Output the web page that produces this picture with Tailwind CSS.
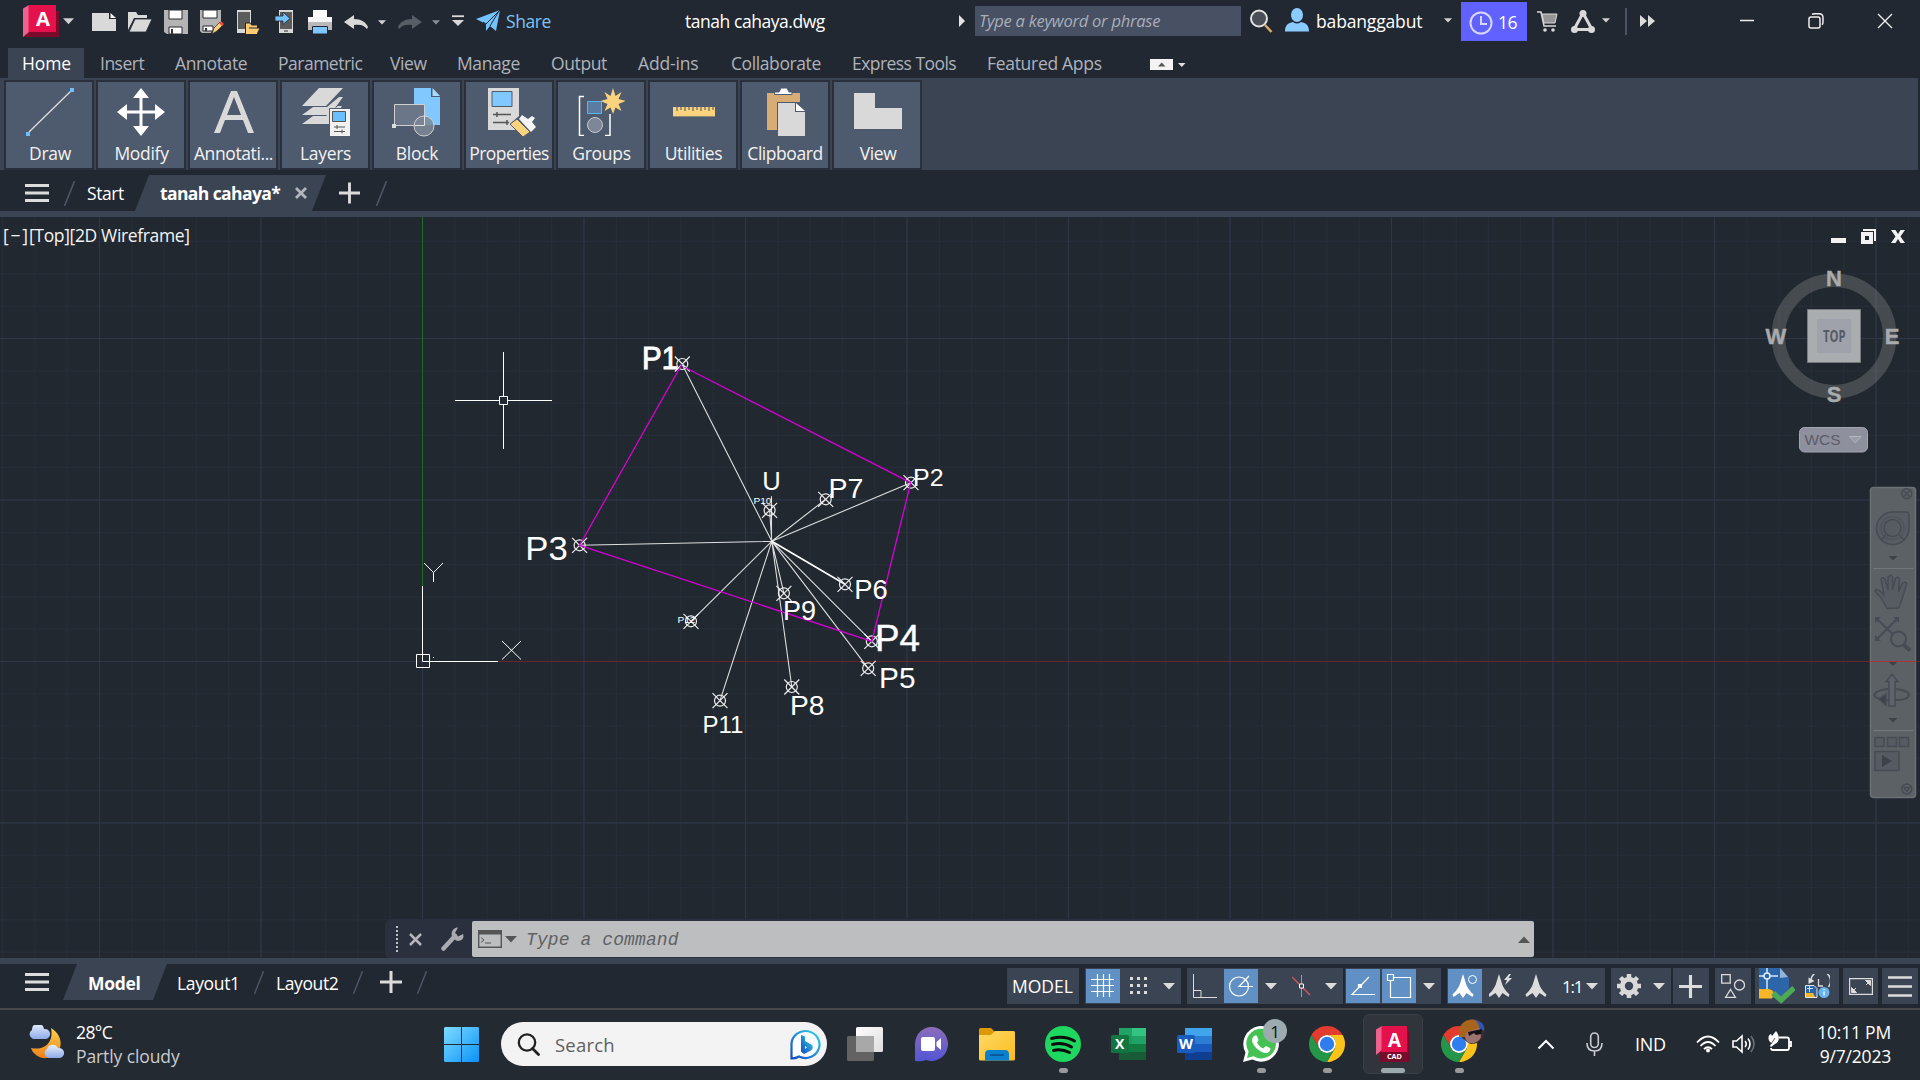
<!DOCTYPE html>
<html lang="en">
<head>
<meta charset="utf-8">
<title>tanah cahaya.dwg</title>
<script src="https://cdn.jsdelivr.net/npm/@tailwindcss/browser@4"></script>
</head>
<body class="w-[1920px] h-[1080px] overflow-hidden bg-[#222831] text-white font-['Open_Sans','Noto_Sans',sans-serif] text-[17.5px] leading-[17px] flex flex-col whitespace-nowrap">
<svg class="hidden">
  <defs>
    <symbol id="caret" viewBox="0 0 12 7"><path d="M0 0h12L6 6.5z" fill="currentColor"/></symbol>
    <symbol id="chrome" viewBox="2 2 44 44">
      <path d="M24 13H43.05A22 22 0 0 0 4.95 13L14.5 29.5A11 11 0 0 1 24 13z" fill="#e33b2e"/>
      <path d="M43.05 13A22 22 0 0 1 24 46L33.5 29.5A11 11 0 0 0 24 13z" fill="#fcc41a"/>
      <path d="M4.95 13A22 22 0 0 0 24 46L33.5 29.5A11 11 0 0 1 14.5 29.5z" fill="#23964a"/>
      <circle cx="24" cy="24" r="11" fill="#fff"/><circle cx="24" cy="24" r="8.8" fill="#2f7ef0"/>
    </symbol>
    <symbol id="burger" viewBox="0 0 24 18"><path d="M0 1.5h24M0 9h24M0 16.5h24" stroke="#dcdcdc" stroke-width="3"/></symbol>
    <symbol id="slash" viewBox="0 0 11 25"><path d="M10.5 0L.5 25" stroke="#4b5566" stroke-width="1.6"/></symbol>
    <symbol id="plus" viewBox="0 0 22 22"><path d="M11 0v22M0 11h22" stroke="#dcdcdc" stroke-width="3"/></symbol>
    <symbol id="compass" viewBox="0 0 24 24"><path d="M12 0l2.500 8c1 4 3 8 8 12.500l-1 2.500-6-4L12 24l-3.500-5-6 4-1-2.500C6.500 16 8.500 12 9.500 8z" fill="currentColor"/></symbol>
  </defs>
</svg>

<!-- title bar -->
<header class="flex h-12 shrink-0 items-start">
  <svg class="ml-[23px] mt-[5px] w-9 h-8 shrink-0" viewBox="0 0 36 32"><path d="M6 6h30v26H0l6-5z" fill="#7c0a2b"/><path d="M0 3.500L6 0v27l-6 5z" fill="#f0628d"/><path d="M5.500 0H33v27H5.500z" fill="#e5114d"/><text x="13" y="21" font-size="20" font-weight="700" fill="#fff" textLength="14" lengthAdjust="spacingAndGlyphs">A</text></svg>
  <svg class="ml-1 mt-[18px] w-[11px] h-[7px] shrink-0 text-[#d0d0d0]"><use href="#caret"/></svg>
  <div class="ml-[18px] mt-[10px] flex gap-3 shrink-0">
    <svg class="size-6" viewBox="0 0 24 24"><path d="M0 3h17v6h7v12H0z" fill="#d9d9d9"/><path d="M18.500 3v5H24z" fill="#f4f4f4"/></svg>
    <svg class="size-6" viewBox="0 0 24 24"><path d="M0 2h8l2 3h9v3H6L0 20z" fill="#d9d9d9"/><path d="M7 9h17l-6 13H1z" fill="#d9d9d9" stroke="#222831" stroke-width=".8"/></svg>
    <svg class="size-6" viewBox="0 0 24 24"><path d="M0 0h24v24H3l-3-2z" fill="#b4b4b4"/><path d="M5 0h13v9H5zM5 17h13v7H5z" fill="#fff" stroke="#222831"/><path d="M7 19h2v5H7z" fill="#333"/></svg>
    <svg class="size-6" viewBox="0 0 24 24"><path d="M0 0h21v13L12 21l-1 2H2l-2-2z" fill="#b4b4b4"/><path d="M3 0h14v8H3zM3 16h10v5H3z" fill="#fff" stroke="#222831"/><path d="M5 18h2v3H5z" fill="#333"/><path d="M12 24l2-6 6-6 3 3-6 6z" fill="#fbcf79" stroke="#222831" stroke-width=".7"/><path d="M19 13l2-2 3 3-2 2z" fill="#ee4b3c"/></svg>
    <svg class="size-6" viewBox="0 0 24 24"><path d="M1 0h14v23H1z" fill="#d9d9d9"/><path d="M2 2h12v17H2z" fill="#5c5c5c"/><path d="M9.500 13h5l1 2h6v3h2.500l-3 6.500H9.500z" fill="#fccb73" stroke="#222831"/><path d="M13 18h9" stroke="#222831"/></svg>
    <svg class="size-6" viewBox="0 0 24 24"><path d="M7 0h14v23H7z" fill="#d9d9d9"/><path d="M8 2h12v17H8z" fill="#5c5c5c"/><path d="M3 6h8V2l7 6.500-7 6V11H3z" fill="#72c3ff" stroke="#222831" stroke-width=".8"/><path d="M12 21h4" stroke="#333"/></svg>
    <svg class="size-6" viewBox="0 0 24 24"><path d="M5 0h14v7H5z" fill="#fff"/><path d="M0 7h24v13H0z" fill="#f5f5f5"/><path d="M0 12h24v8H0z" fill="#b9b9b9"/><path d="M4.500 16.500h15V24h-15z" fill="#7fc5ff" stroke="#222831"/></svg>
    <svg class="size-6" viewBox="0 0 24 24"><path d="M0 12l10-7v4c7 0 12 3 14 8l-1 2c-3-4-7-5-13-4v4z" fill="#d9d9d9"/></svg>
  </div>
  <svg class="ml-[10px] mt-5 w-2 h-[5px] shrink-0 text-[#d0d0d0]"><use href="#caret"/></svg>
  <svg class="ml-3 mt-[10px] size-6 shrink-0" viewBox="0 0 24 24"><path d="M24 12L14 5v4C7 9 2 12 0 17l1 2c3-4 7-5 13-4v4z" fill="#585e66"/></svg>
  <svg class="ml-[10px] mt-5 w-2 h-[5px] shrink-0 text-[#8a8f96]"><use href="#caret"/></svg>
  <svg class="ml-3 mt-[15px] w-3 h-3 shrink-0" viewBox="0 0 12 12"><path d="M0 1.200h12" stroke="#d9d9d9" stroke-width="1.800"/><path d="M0 5h12l-6 6z" fill="#d9d9d9"/></svg>
  <svg class="ml-3 mt-[10px] w-6 h-[21px] shrink-0" viewBox="0 0 24 21"><path d="M24 0l-4 21-6-5-4 5V14L0 9z" fill="#72c3ff"/><path d="M24 0L10 14M14 16L23 1M10 14l-3-2" stroke="#222831"/></svg>
  <span class="ml-[6px] mt-[13px] w-[45px] text-[#7cc3f5] tracking-[-0.45px]">Share</span>
  <span class="ml-[134px] mt-[13px] w-[143px] tracking-[-0.45px]">tanah cahaya.dwg</span>
  <svg class="ml-[131px] mt-[15px] w-[6px] h-3 shrink-0" viewBox="0 0 6 12"><path d="M0 0l6 6-6 6z" fill="#e5e5e5"/></svg>
  <div class="ml-[10px] mt-[6px] h-[30px] w-[266px] shrink-0 bg-[#485064] pl-1 pt-[6px] text-[16.500px] italic text-[#a9aeb8] tracking-[-0.25px]">Type a keyword or phrase</div>
  <svg class="ml-[9px] mt-[9px] w-[23px] h-6 shrink-0" viewBox="0 0 23 24"><circle cx="9" cy="9.500" r="8" fill="#4a4f57" stroke="#e2e2e2" stroke-width="2"/><path d="M15 16l6.500 7" stroke="#dba96b" stroke-width="2.500"/></svg>
  <svg class="ml-[12px] mt-2 w-6 h-6 shrink-0" viewBox="0 0 24 24"><ellipse cx="12" cy="7" rx="6" ry="7" fill="#8accff"/><path d="M0 23.500C0 17 3 15 8 14q4 3 8 0c5 1 8 3 8 9.500z" fill="#8accff"/></svg>
  <span class="ml-[7px] mt-[13px] w-[109px] shrink-0 tracking-[-0.15px]">babanggabut</span>
  <svg class="ml-[19px] mt-[18px] w-2 h-[5px] shrink-0 text-[#d0d0d0]"><use href="#caret"/></svg>
  <div class="ml-[9px] mt-[2px] flex h-[39px] w-[66px] shrink-0 items-center bg-[#6161ff] pl-2 pt-[2px]">
    <svg class="size-6" viewBox="0 0 24 24" fill="none" stroke="#d5d8ff" stroke-width="2"><circle cx="12" cy="12" r="10.500"/><path d="M12 5v8h6"/></svg><span class="ml-[5px] tracking-[-0.4px]">16</span>
  </div>
  <svg class="ml-[10px] mt-[11px] w-[21px] h-[21px] shrink-0" viewBox="0 0 21 21"><path d="M0 1h4l3 14h12" stroke="#d9d9d9" stroke-width="1.500" fill="none"/><path d="M5 3h15l-2 9H7z" fill="#969696" stroke="#d9d9d9"/><circle cx="8" cy="19" r="1.800" fill="#d9d9d9"/><circle cx="16" cy="19" r="1.800" fill="#d9d9d9"/></svg>
  <svg class="ml-[13px] mt-[10px] w-6 h-[23px] shrink-0" viewBox="0 0 24 23"><path d="M12 3L3 19.500h18z" fill="none" stroke="#d9d9d9" stroke-width="3"/><circle cx="12" cy="3.500" r="3.500" fill="#d9d9d9"/><circle cx="3.500" cy="19.500" r="3.500" fill="#d9d9d9"/><circle cx="20.500" cy="19.500" r="3.500" fill="#d9d9d9"/></svg>
  <svg class="ml-[7px] mt-[18px] w-2 h-[5px] shrink-0 text-[#d0d0d0]"><use href="#caret"/></svg>
  <div class="ml-[15px] mt-2 h-[27px] w-[2px] shrink-0 bg-[#4b5266]"></div>
  <svg class="ml-[13px] mt-[15px] w-[15px] h-3 shrink-0" viewBox="0 0 15 12"><path d="M0 0l7 6-7 6zM8 0l7 6-7 6z" fill="#dcdcdc"/></svg>
  <svg class="ml-[85px] mt-[13px] w-[14px] h-4 shrink-0" viewBox="0 0 14 16"><path d="M0 7.500h14" stroke="#eee" stroke-width="1.500"/></svg>
  <svg class="ml-[54px] mt-[13px] size-4 shrink-0" viewBox="0 0 16 16" fill="none" stroke="#eee" stroke-width="1.500"><rect x="1" y="4" width="11" height="11" rx="2"/><path d="M4 1.500q1-.8 3-.8h4q4 0 4 4v4q0 2-1 3"/></svg>
  <svg class="ml-[53px] mt-[13px] size-4 shrink-0" viewBox="0 0 16 16"><path d="M1 1l14 14M15 1L1 15" stroke="#eee" stroke-width="1.400"/></svg>
</header>

<!-- ribbon tabs -->
<nav class="flex h-[30px] shrink-0 pl-2 text-[#adb3bc] leading-[31px] tracking-[-0.4px]">
  <span class="w-[76px] bg-[#3b4453] pl-[14px] text-white tracking-[-0.1px]">Home</span>
  <span class="ml-[16px] w-[75px] tracking-[-0.5px]">Insert</span><span class="w-[103px] tracking-[-0.35px]">Annotate</span><span class="w-[112px] tracking-[-0.5px]">Parametric</span><span class="w-[67px]">View</span><span class="w-[94px]">Manage</span><span class="w-[87px]">Output</span><span class="w-[93px] tracking-[-0.15px]">Add-ins</span><span class="w-[121px]">Collaborate</span><span class="w-[135px] tracking-[-0.55px]">Express Tools</span><span class="w-[163px] tracking-[-0.3px]">Featured Apps</span>
  <svg class="mt-[11px] w-9 h-[11px]" viewBox="0 0 36 11"><path d="M0 0h23v11H0z" fill="#f3f3f3"/><path d="M8 7.500h7.500L11.700 3.500z" fill="#555"/><path d="M28 4h7.500l-3.700 4z" fill="#e0e0e0"/></svg>
</nav>

<!-- ribbon panels -->
<section class="flex h-[92px] shrink-0 gap-[6px] border-r-2 border-[#222831] bg-[#3b4453] pl-[6px] pt-1 text-[#f2f2f2] text-center tracking-[-0.3px]">
  <div class="flex h-[86px] w-[86px] flex-col items-center bg-[#4e5a6d] outline-2 outline-[#29303b]"><svg class="mt-[6px] ml-[2px] size-12" viewBox="0 0 48 48"><path d="M3 44L45 3" stroke="#dedede" stroke-width="1.300"/><path d="M0 44h4v4H0zM44 0h4v4h-4z" fill="#69bfff"/></svg><span class="ml-[2px] mt-[9px]">Draw</span></div>
  <div class="flex h-[86px] w-[86px] flex-col items-center bg-[#4e5a6d] outline-2 outline-[#29303b]"><svg class="mt-[6px] size-12" viewBox="0 0 48 48"><path d="M24 5v38M5 24h38" stroke="#fff" stroke-width="3"/><path d="M24 0l8 10H16zM24 48l8-10H16zM0 24l10-8v16zM48 24l-10-8v16z" fill="#fff"/></svg><span class="ml-px mt-[9px]">Modify</span></div>
  <div class="flex h-[86px] w-[86px] flex-col items-center bg-[#4e5a6d] outline-2 outline-[#29303b]"><svg class="ml-[2px] mt-[6px] size-12" viewBox="0 0 48 48"><path d="M4 45L21 3h6l17 42h-6l-5-13H15l-5 13zM17 27h14L24 9z" fill="#d9d9d9" fill-rule="evenodd"/></svg><span class="ml-px mt-[9px] tracking-[-0.4px]">Annotati...</span></div>
  <div class="flex h-[86px] w-[86px] flex-col items-center bg-[#4e5a6d] outline-2 outline-[#29303b]"><svg class="ml-[2px] mt-[6px] size-12" viewBox="0 0 48 48"><path d="M17 0h24L24 18H0zM11 19h14L37 9h4L28 27H0zM11 28h13l12-10h4L28 36H0z" fill="#d9d9d9"/><path d="M27.500 20.500h21v28h-21z" fill="#f1f1f1" stroke="#4e5a6d"/><path d="M30.500 23.500h13v10h-13z" fill="#69bfff" stroke="#555"/><path d="M32 39h11M32 43.500h11M35 37v4M40 41.500v4" stroke="#555"/></svg><span class="ml-px mt-[9px]">Layers</span></div>
  <div class="flex h-[86px] w-[86px] flex-col items-center bg-[#4e5a6d] outline-2 outline-[#29303b]"><svg class="mt-[6px] size-12 overflow-visible" viewBox="0 0 48 48"><path d="M21 0h17v9h9v28H21z" fill="#80c8ff"/><path d="M39.500 0v8H47z" fill="#a9dbff"/><path d="M1.500 16.500h30v21h-30z" fill="#6b7689" stroke="#cfcfcf"/><circle cx="31" cy="38" r="10" fill="#7d8798" fill-opacity=".85" stroke="#cfcfcf"/><path d="M22 37.500h9.500V28" stroke="#e2e2e2" fill="none"/><path d="M-1 36h4v4h-4z" fill="#ddd"/></svg><span class="mt-[9px]">Block</span></div>
  <div class="flex h-[86px] w-[86px] flex-col items-center bg-[#4e5a6d] outline-2 outline-[#29303b]"><svg class="ml-[3px] mt-[6px] size-12 overflow-visible" viewBox="0 0 48 48"><path d="M1 0h31v42H1z" fill="#d9d9d9"/><path d="M5 3.500h20v15H5z" fill="#80c8ff" stroke="#4e5a6d"/><path d="M6 26.500h18M6 34.500h16M10 24v5M20 32v5" stroke="#555" stroke-width="1.500"/><path d="M23 36l9-8 6-1 4 4 4-4 3 2-4 5 4 5-3 9-6 3z" fill="#4e5a6d"/><path d="M32 31l3-4 6 4 4-3 3 2-3 4 4 5-5 5z" fill="#f4f4f4"/><path d="M23 36l7-5 13 13-7 5z" fill="#fbd37d" stroke="#4e5a6d"/></svg><span class="mt-[9px] tracking-[-0.5px]">Properties</span></div>
  <div class="flex h-[86px] w-[86px] flex-col items-center bg-[#4e5a6d] outline-2 outline-[#29303b]"><svg class="mt-[6px] size-12" viewBox="0 0 48 48"><path d="M7 8.500H2.500v39H7M28 47.500h5V26" stroke="#fff" stroke-width="1.500" fill="none"/><path d="M10.500 13.500h14v12h-14z" fill="#597ca3" stroke="#58b4f5"/><circle cx="18" cy="37" r="7.500" fill="#7d8798" stroke="#c8c8c8"/><path d="M36 0l2.500 8 6-4-3 7 7 2-7 3 3 7-6-3.500L36 26l-2.500-6.500-6 3.500 3-7-7-3 7-2-3-7 6 4z" fill="#fbd37d"/></svg><span class="ml-px mt-[9px]">Groups</span></div>
  <div class="flex h-[86px] w-[86px] flex-col items-center bg-[#4e5a6d] outline-2 outline-[#29303b]"><svg class="ml-[2px] mt-[6px] size-12" viewBox="0 0 48 48"><path d="M3 19h42v9H3z" fill="#fbd37d"/><path d="M3 28.500h42" stroke="#8b8874"/><path d="M7 19v4M11 19v3M15 19v4M19 19v3M23 19v4M27 19v3M31 19v4M35 19v3M39 19v4M43 19v3" stroke="#666" stroke-width="1.200"/></svg><span class="ml-px mt-[9px] tracking-[-0.4px]">Utilities</span></div>
  <div class="flex h-[86px] w-[86px] flex-col items-center bg-[#4e5a6d] outline-2 outline-[#29303b]"><svg class="mt-[6px] size-12" viewBox="0 0 48 48"><path d="M6 5h33v37H6z" fill="#d8ac75"/><path d="M13.500 6.500V4H18l2-4h6l2 4h3v2.500z" fill="#fff" stroke="#4e5a6d"/><path d="M16 14h28v34H16z" fill="#4e5a6d"/><path d="M17 15h17v9h10v24H17z" fill="#d9d9d9"/><path d="M35 15v8h9z" fill="#fff"/></svg><span class="mt-[9px] tracking-[-0.45px]">Clipboard</span></div>
  <div class="flex h-[86px] w-[86px] flex-col items-center bg-[#4e5a6d] outline-2 outline-[#29303b]"><svg class="ml-[2px] mt-[6px] size-12" viewBox="0 0 48 48"><path d="M0 5h21v15h27v21H0z" fill="#d9d9d9"/></svg><span class="ml-[2px] mt-[9px] tracking-[-0.4px]">View</span></div>
</section>

<!-- document tabs -->
<nav class="flex h-[41px] shrink-0 items-start">
  <svg class="ml-[25px] mt-[14px] w-6 h-[18px]"><use href="#burger"/></svg>
  <svg class="ml-[15px] mt-[11px] w-[11px] h-[25px]"><use href="#slash"/></svg>
  <span class="ml-[12px] mt-[15px] w-[48px] tracking-[-0.45px]">Start</span>
  <div class="mt-[5px] flex h-9 w-[191px] items-center bg-[#3b4453] pl-[25px] text-[17.500px] font-bold tracking-[-0.6px] [clip-path:polygon(14px_0,100%_0,177px_100%,0_100%)]"><span class="w-[122px]">tanah cahaya*</span><svg class="ml-[13px] size-3" viewBox="0 0 12 12"><path d="M1 1l10 10M11 1L1 11" stroke="#b2b6bd" stroke-width="2.800"/></svg></div>
  <svg class="ml-[13px] mt-3 w-[21px] h-[22px]"><use href="#plus"/></svg>
  <svg class="ml-[16px] mt-[11px] w-[11px] h-[25px]"><use href="#slash"/></svg>
</nav>
<div class="h-[6px] shrink-0 bg-[#3b4453]"></div>

<!-- drawing area -->
<main class="relative h-[741px] shrink-0 overflow-hidden bg-[#212830]">
  <svg class="block w-[1920px] h-[741px]" viewBox="0 217 1920 741" font-family="Liberation Sans, Arial, sans-serif">
    <defs>
      <pattern id="minor" x="422" y="661" width="32.3" height="32.3" patternUnits="userSpaceOnUse"><path d="M0 .5h32.300M.5 0v32.300" stroke="#272e39"/></pattern>
      <pattern id="major" x="422" y="661" width="161.5" height="161.5" patternUnits="userSpaceOnUse"><path d="M0 .5h161.500M.5 0v161.500" stroke="#2f3648"/></pattern>
      <g id="pt" stroke="#eee" fill="none" stroke-width="1.200"><circle r="5.500"/><path d="M-7.500-7.500l15 15M7.500-7.500l-15 15"/></g>
    </defs>
    <rect y="217" width="1920" height="741" fill="url(#minor)"/><rect y="217" width="1920" height="741" fill="url(#major)"/>
    <path d="M422.500 217v369" stroke="#1f6a24"/><path d="M498 661.500h1422" stroke="#6a252b"/>
    <g stroke="#fff" fill="none">
      <path d="M422.500 586v75.500H498" /><path d="M416.500 654.500h13v13h-13z"/>
      <path d="M502 641l19 18.500M521 641l-19 18.500M424 563l9.500 9.500 9.500-9.500M433.500 572.500V582M433 657.500h1"/>
      <path d="M455 400.500h44M508 400.500h44M503.500 352v44M503.500 405v44M499.500 396.500h8v8h-8z"/>
    </g>
    <g stroke="#dedede" stroke-width="1.100" fill="none">
      <path d="M771.800 541.300L682 364M771.800 541.300L910.700 482.700M771.800 541.300L579.600 545.300M771.800 541.300L871.800 641.300M771.800 541.300L868.200 668.300M771.800 541.300L825.700 499.300M771.800 541.300L791.800 687M771.800 541.300L783.900 593.300M771.800 541.300L769.600 510.300M771.800 541.300L720 700.700M771.800 541.300L691 621.300M771.500 541.300V496.300"/>
      <path d="M771.800 541.300L845 584.300" stroke="#fff" stroke-width="1.600"/>
    </g>
    <use href="#pt" x="682.300" y="364"/><use href="#pt" x="911" y="482.700"/><use href="#pt" x="579.600" y="545.300"/><use href="#pt" x="871.800" y="641.300"/><use href="#pt" x="868.200" y="668.300"/><use href="#pt" x="845" y="584.300"/><use href="#pt" x="825.700" y="499.300"/><use href="#pt" x="791.800" y="687"/><use href="#pt" x="783.900" y="593.300"/><use href="#pt" x="769.600" y="510.300"/><use href="#pt" x="720" y="700.700"/><use href="#pt" x="691" y="621.300"/>
    <path d="M682 364L579.600 545.300 871.800 641.300 910.700 482.700 685 367.500" stroke="#d800d8" stroke-width="1.300" fill="none"/>
    <g fill="#fff">
      <text x="642" y="368.500" font-size="32" textLength="36" stroke="#fff" stroke-width="1" lengthAdjust="spacingAndGlyphs">P1</text>
      <text x="913" y="486" font-size="24" textLength="30.500" lengthAdjust="spacingAndGlyphs">P2</text>
      <text x="525.300" y="560" font-size="34" textLength="42.500" lengthAdjust="spacingAndGlyphs">P3</text>
      <text x="875" y="651" font-size="37" textLength="45" lengthAdjust="spacingAndGlyphs" stroke="#fff" stroke-width=".4">P4</text>
      <text x="879" y="688" font-size="29" textLength="36.500" lengthAdjust="spacingAndGlyphs">P5</text>
      <text x="854.300" y="598.500" font-size="27.500" textLength="33.500" lengthAdjust="spacingAndGlyphs">P6</text>
      <text x="828.500" y="497.500" font-size="27.500" textLength="35" lengthAdjust="spacingAndGlyphs">P7</text>
      <text x="790" y="715.300" font-size="27.500" textLength="34.500" lengthAdjust="spacingAndGlyphs">P8</text>
      <text x="783" y="620.300" font-size="27.500" textLength="33" lengthAdjust="spacingAndGlyphs">P9</text>
      <text x="702.500" y="732.500" font-size="23.500" textLength="41" lengthAdjust="spacingAndGlyphs">P11</text>
      <text x="762.300" y="489.500" font-size="25" textLength="18.500" lengthAdjust="spacingAndGlyphs">U</text>
      <text x="753.500" y="503.500" font-size="9.500" textLength="18" lengthAdjust="spacingAndGlyphs">P10</text>
      <text x="677.500" y="623" font-size="9.500" textLength="18" lengthAdjust="spacingAndGlyphs">P12</text>
    </g>
    <g fill="#f4f4f4" font-family="Open Sans" font-size="17.500"><text x="3" y="242" textLength="25">[−]</text><text x="29" y="242" textLength="161">[Top][2D Wireframe]</text></g>
    <g fill="#f2f2f2"><path d="M1831 238h15v5h-15z"/><path d="M1863 229h13v12h-2v-10h-11z"/><path d="M1861 232h12v12h-12zM1865 236v4h4v-4z" fill-rule="evenodd"/><path d="M1891 230h4.500l2.500 4 2.500-4h4.500l-4.500 6.500 4.500 6.500h-4.500l-2.500-4-2.500 4h-4.500l4.500-6.500z"/></g>

    <!-- view cube -->
    <circle cx="1834" cy="336" r="55.700" fill="none" stroke="#969696" stroke-opacity=".32" stroke-width="13.500"/>
    <path d="M1807.500 309.500h53v53h-53z" fill="#aaadb0" stroke="#777b80"/><path d="M1817 319h34v34h-34z" fill="#9fa2ab"/>
    <text x="1823" y="341.500" font-size="16" font-weight="700" fill="#555a64" font-family="Open Sans" textLength="22.500" lengthAdjust="spacingAndGlyphs">TOP</text>
    <g fill="#a9abad" stroke="#a9abad" stroke-width=".4" font-weight="700" font-size="22" text-anchor="middle"><text x="1834" y="286">N</text><text x="1834" y="402">S</text><text x="1776" y="344">W</text><text x="1892" y="344">E</text></g>
    <rect x="1799.500" y="427.500" width="68" height="24.500" rx="5" fill="#8f909d" stroke="#a3a4ae"/>
    <text x="1804.500" y="444.500" font-size="15.500" fill="#5b5d68" textLength="36" lengthAdjust="spacingAndGlyphs">WCS</text><path d="M1849.500 436.500h11.500l-5.700 6.300z" fill="#9a9ba7" stroke="#b5b6bf"/>

    <!-- navigation bar -->
    <g transform="translate(1870 487)" stroke="#464b54" fill="none" stroke-width="1.500">
      <rect x=".5" y=".5" width="45" height="310" rx="3" fill="#5c6165" stroke="#6c7175"/>
      <circle cx="36.700" cy="6.700" r="5"/><path d="M34 4l5.500 5.500M39.500 4L34 9.500"/>
      <path d="M22.500 25H36q3 0 3 3v13A16.300 16.300 0 1 1 22.500 25z" fill="#575c63"/><circle cx="22.500" cy="41" r="11.500" opacity=".4"/><circle cx="22.500" cy="41" r="8.500"/><path d="M16 48l-5 5M29 48l5 5"/>
      <path d="M18.500 69h9L23 73.500zM18.500 174.500h9L23 179zM18.500 231h9l-4.500 4.500z" fill="#3d424a" stroke="none"/>
      <path d="M3 81.500h40M3 243.500h40" stroke="#72777b" stroke-width="1"/>
      <path d="M17 121.500L11 111l-6-7q1-3 5 0l4 4-3-16q2-3 4 0l3 11V90q2.500-3 4.500 0v13l3-12q3-2 4 1l-1 13 4-9q3-2 4 1l-5 17-3 7z" fill="#575c63"/>
      <path d="M7 132l21 20M27 132L7 152" stroke-width="2"/><path d="M5 130h6l-6 6zM29 130v6l-6-6zM5 154v-6l6 6z" fill="#464b54" stroke="none"/><circle cx="28.500" cy="152" r="7.500" fill="#5c6165" stroke-width="2"/><path d="M34 158l6 5.500" stroke-width="4"/>
      <path d="M18 202C1 204 1 211 12 212M26 202c18 2 16 11 1 11H12" stroke-width="2"/><path d="M9 212l7-5v11z" fill="#3d424a"/><path d="M22 187.500l6 7h-3V219h-6v-24.500h-3z" fill="#5f646a"/>
      <path d="M5 250.500h9v9H5zM17.500 250.500h9v9h-9zM29.500 250.500h9v9h-9zM5 264.500h24v19H5z" fill="#565b62"/><path d="M12 268l10 6-10 6z" fill="#3d424a" stroke="none"/>
      <circle cx="36.700" cy="302" r="5"/><path d="M34 300.500h5.500l-2.700 4z"/>
      <path d="M0 174.500h46" stroke="#b03038" stroke-width="1"/>
    </g>
  </svg>

  <!-- command line -->
  <div class="absolute left-[385px] top-[702px] flex h-10 w-[1149px] items-center rounded-md bg-[#2a303d]">
    <div class="ml-[11px] h-[26px] border-l-2 border-dotted border-[#bfc1c6]"></div>
    <svg class="ml-[11px] w-[13px] h-[13px]" viewBox="0 0 13 13"><path d="M1 1l11 11M12 1L1 12" stroke="#b5b7bb" stroke-width="2.500"/></svg>
    <svg class="ml-[19px] w-[23px] h-6" viewBox="0 0 23 24"><path d="M2.500 21.500L14 9" stroke="#a9abb0" stroke-width="4.500" stroke-linecap="round"/><path d="M17 .5l-3 5.500 3 3.500 5-2.500c2 5-3 8-7 6.500l-4-4C9.500 4 13 .5 17 .5z" fill="#a9abb0"/></svg>
    <div class="ml-[8px] flex h-9 flex-1 items-center rounded-[2px] bg-[#bcbec0] pl-[6px] pr-[4px] text-[18px] italic text-[#606265] font-['Liberation_Mono',monospace]">
      <svg class="w-6 h-[18px]" viewBox="0 0 24 18"><path d="M.7.700h22.600v16.600H.7z" fill="none" stroke="#555" stroke-width="1.400"/><path d="M0 0h24v4.500H0z" fill="#555"/><path d="M3 7.500l3 2.500-3 2.500M7 13h6" stroke="#555" fill="none"/></svg>
      <svg class="ml-[3px] w-3 h-[7px] text-[#555]"><use href="#caret"/></svg>
      <span class="ml-[9px] mt-[2px] flex-1 tracking-[0.1px]">Type a command</span>
      <svg class="w-3 h-[7px] rotate-180 text-[#555]"><use href="#caret"/></svg>
    </div>
  </div>
</main>
<div class="h-[6px] shrink-0 bg-[#3b4453]"></div>

<!-- layout tabs and status bar -->
<section class="flex h-11 shrink-0 items-start">
  <svg class="ml-[25px] mt-[9px] w-6 h-[18px]"><use href="#burger"/></svg>
  <div class="ml-[14px] h-9 w-[104px] bg-[#3b4453] pl-[25px] pt-[11px] font-bold tracking-[-0.3px] [clip-path:polygon(14px_0,100%_0,90px_100%,0_100%)]">Model</div>
  <span class="ml-[10px] mt-[11px] w-[67px] tracking-[-0.35px]">Layout1</span>
  <svg class="ml-[10px] mt-[6px] w-[10px] h-[25px]"><use href="#slash"/></svg>
  <span class="ml-[12px] mt-[11px] w-[67px] tracking-[-0.4px]">Layout2</span>
  <svg class="ml-[10px] mt-[6px] w-[10px] h-[25px]"><use href="#slash"/></svg>
  <svg class="ml-[17px] mt-[7px] size-[22px]"><use href="#plus"/></svg>
  <svg class="ml-[15px] mt-[6px] w-[10px] h-[25px]"><use href="#slash"/></svg>

  <div class="ml-auto mr-[2px] mt-1 flex h-9 items-stretch text-[#dcdcdc]">
    <div class="mr-[6px] w-[72px] bg-[#3b4453] pl-[5px] pt-[10px] text-white tracking-[0px]">MODEL</div>
    <div class="mr-[6px] flex w-24 items-center bg-[#3b4453] pl-px">
      <svg class="size-[34px] bg-[#6190c4]" viewBox="0 0 34 34"><path d="M11.500 5v23M17.500 5v23M23.500 5v23M5 10.500h23M5 16.500h23M5 22.500h23" stroke="#fff" stroke-width="1.200"/></svg>
      <svg class="ml-[10px] size-[18px]" viewBox="0 0 18 18" fill="#dcdcdc"><path d="M0 0h3v3H0zM7 0h3v3H7zM14 0h3v3h-3zM0 7h3v3H0zM7 7h3v3H7zM14 7h3v3h-3zM0 14h3v3H0zM7 14h3v3H7zM14 14h3v3h-3z"/></svg>
      <svg class="ml-[15px] w-3 h-[7px]"><use href="#caret"/></svg>
    </div>
    <div class="mr-[2px] flex w-[156px] items-center bg-[#3b4453]">
      <svg class="ml-[6px] size-6" viewBox="0 0 24 24" fill="none" stroke="#dcdcdc"><path d="M.5 0v23.500H24M.5 16.500H8v7"/></svg>
      <svg class="ml-[7px] size-[34px] bg-[#6190c4]" viewBox="0 0 34 34" fill="none" stroke="#fff" stroke-width="1.200"><circle cx="15" cy="17.500" r="9.500"/><path d="M29 17.500H15L25 7"/></svg>
      <svg class="ml-[7px] w-3 h-[7px]"><use href="#caret"/></svg>
      <svg class="ml-[15px] w-[19px] h-[22px]" viewBox="0 0 19 22" fill="none"><path d="M9.500 0v22" stroke="#52c46f"/><path d="M0 2l18 18" stroke="#e25757" stroke-width="1.200"/><path d="M7.500 9h4v4h-4z" stroke="#fff" fill="#3b4453"/></svg>
      <svg class="ml-[14px] w-3 h-[7px]"><use href="#caret"/></svg>
    </div>
    <div class="mr-[6px] flex w-24 items-center gap-[2px] bg-[#3b4453] pl-px">
      <svg class="size-[34px] bg-[#6190c4]" viewBox="0 0 34 34" fill="none" stroke="#fff" stroke-width="1.200"><path d="M29 25.500H6L23 8"/><path d="M12.500 15.500h3v3h-3z" fill="#fff"/></svg>
      <svg class="size-[34px] bg-[#6190c4]" viewBox="0 0 34 34" fill="none" stroke="#fff" stroke-width="1.200"><path d="M12 8.500h16.500v20h-20V12M5.500 5.500h6v6h-6z"/></svg>
      <svg class="ml-[5px] w-3 h-[7px]"><use href="#caret"/></svg>
    </div>
    <div class="mr-[6px] flex w-[158px] items-center bg-[#3b4453] pl-px">
      <svg class="size-[34px] bg-[#6190c4] text-white" viewBox="0 0 34 34"><use href="#compass" x="3" y="5" width="24" height="24"/><circle cx="24.500" cy="10.500" r="4" fill="#6190c4" stroke="#fff"/></svg>
      <svg class="ml-[7px] size-6" viewBox="0 0 24 24"><use href="#compass" x="-2" width="24" height="24"/><path d="M20 0l-5 6h3l-2 5 7-7h-3.500L22 0z" fill="currentColor"/></svg>
      <svg class="ml-[11px] size-6"><use href="#compass"/></svg>
      <span class="ml-[14px] w-[23px] text-white text-[17px] tracking-[-1.2px]">1:1</span>
      <svg class="ml-[1px] w-3 h-[7px]"><use href="#caret"/></svg>
    </div>
    <div class="mr-[2px] flex w-[60px] items-center bg-[#3b4453] pl-[6px]">
      <svg class="size-6" viewBox="0 0 24 24"><circle cx="12" cy="12" r="6.700" fill="none" stroke="#d9d9d9" stroke-width="5"/><path d="M12 0v4M12 20v4M0 12h4M20 12h4M3.500 3.500l3 3M17.500 17.500l3 3M20.500 3.500l-3 3M6.500 17.500l-3 3" stroke="#d9d9d9" stroke-width="4.500"/></svg>
      <svg class="ml-[12px] w-3 h-[7px]"><use href="#caret"/></svg>
    </div>
    <div class="mr-[6px] flex w-9 items-center bg-[#3b4453] pl-[6px]"><svg class="size-[23px]"><use href="#plus"/></svg></div>
    <div class="mr-[4px] flex w-9 items-center justify-center bg-[#3b4453]"><svg class="size-6" viewBox="0 0 24 24" fill="none" stroke="#dcdcdc" stroke-width="1.300"><path d="M.7.700h8.500v8.500H.7zM9.500 15.500l5 8h-10z"/><circle cx="18.500" cy="11" r="5"/></svg></div>
    <div class="mr-[4px] flex w-[84px] items-center bg-[#3b4453] pl-1">
      <svg class="h-9 w-9" viewBox="0 0 36 36"><path d="M0 0h22l8 10v10l-9 10H0z" fill="#2c65a8"/><path d="M21 0l8 9-8 1z" fill="#92b4d8"/><path d="M0 8h19M8 0v21" stroke="#a9c6e6" stroke-width="2"/><circle cx="8" cy="8" r="3" fill="#2c65a8" stroke="#e0ecf8" stroke-width="1.500"/><path d="M0 21h9q4 0 6 4l-2 5.500H0z" fill="#f7b528"/><path d="M14 25l8 7L35 20" stroke="#4caa57" stroke-width="5.500" fill="none"/></svg>
      <svg class="ml-[10px] w-[25px] h-6" viewBox="0 0 25 24"><path d="M6 6A9.800 9.800 0 1 1 23.500 13" fill="none" stroke="#dcdcdc" stroke-width="1.500"/><path d="M3.500 3.500v6.500L9.500 7z" fill="#dcdcdc"/><path d="M13.500 5v7H18" fill="none" stroke="#dcdcdc" stroke-width="1.300"/><path d="M.5 11.500h8.500l3 3v9H.5z" fill="#2c65a8" stroke="#e5e5e5"/><path d="M1 19h7l2 4H1z" fill="#f7b528"/><path d="M2 14.500h6M4.500 12v6" stroke="#c6daf0"/><circle cx="19" cy="18.500" r="5.500" fill="#67b5ef"/><path d="M19 17.500v4M19 15v1.300" stroke="#fff" stroke-width="1.300"/></svg>
    </div>
    <div class="mr-[4px] flex w-[35px] items-center justify-center bg-[#3b4453]"><svg class="w-6 h-[17px]" viewBox="0 0 24 17"><path d="M.6.600h22.800v15.800H.6z" fill="none" stroke="#dcdcdc" stroke-width="1.200"/><path d="M21.500 2.500v5l-5-5zM2.500 14.500v-5l5 5zM17 7l3-3M7 10l-3 3" fill="#dcdcdc" stroke="#dcdcdc" stroke-width="1"/></svg></div>
    <div class="flex w-9 items-center justify-center bg-[#3b4453]"><svg class="w-6 h-[21px]" viewBox="0 0 24 21"><path d="M0 1.500h24M0 10.500h24M0 19.500h24" stroke="#dcdcdc" stroke-width="2.500"/></svg></div>
  </div>
</section>

<!-- taskbar -->
<footer class="flex h-[72px] shrink-0 items-center border-t-2 border-[#47484c] bg-[#242a32] pb-[2px]">
  <svg class="ml-7 w-[37px] h-[34px] -mt-1" viewBox="0 0 37 34"><defs><linearGradient id="mn" x2="0" y2="1"><stop stop-color="#fbd34c"/><stop offset="1" stop-color="#ef7f1c"/></linearGradient><linearGradient id="cl" x2="0" y2="1"><stop stop-color="#e8effc"/><stop offset="1" stop-color="#8faae8"/></linearGradient></defs><path d="M23 3c14 8 13 28-4 30-8 1-14-4-16-10 14 3 23-6 20-20z" fill="url(#mn)"/><path d="M5 14a5 5 0 0 1-1-9 6 6 0 0 1 12-1 5 5 0 0 1 2 10z" fill="url(#cl)"/><path d="M20 33a5 5 0 0 1-1-9 6 6 0 0 1 11-1 5 5 0 0 1 2 10z" fill="url(#cl)"/></svg>
  <div class="ml-[11px] flex w-[110px] flex-col gap-[7px]"><span class="tracking-[-0.6px]">28°C</span><span class="text-[#c9cbce] tracking-[-0.1px]">Partly cloudy</span></div>
  <svg class="ml-[258px] size-[35px]" viewBox="0 0 35 35"><defs><linearGradient id="wn" x2="1" y2="1"><stop stop-color="#7fdcff"/><stop offset="1" stop-color="#0892f8"/></linearGradient></defs><path d="M1 0h16v17H0V1zM18 0h16l1 1v16H18zM0 18h17v17H1l-1-1zM18 18h17v16l-1 1H18z" fill="url(#wn)"/></svg>
  <div class="ml-[22px] flex h-11 w-[326px] items-center rounded-full bg-[#f3f3f3] text-[18.500px] text-[#5f5f5f]">
    <svg class="ml-4 size-[23px]" viewBox="0 0 23 23"><circle cx="10" cy="9.500" r="8.200" fill="none" stroke="#222" stroke-width="2.300"/><path d="M15.500 15.500l6 6" stroke="#222" stroke-width="2.800" stroke-linecap="round"/></svg>
    <span class="ml-[15px] w-[62px] tracking-[0.2px]">Search</span>
    <svg class="ml-[173px] size-[31px]" viewBox="0 0 31 31"><defs><linearGradient id="bg" x1="1" x2="0" y2="1"><stop stop-color="#30d5e8"/><stop offset="1" stop-color="#1747c0"/></linearGradient></defs><path d="M1.500 29.500V15A14 13.500 0 1 1 9 27.500q-3 2-7.500 2z" fill="#f8fcff" stroke="url(#bg)" stroke-width="2.200"/><path d="M11 6l4 1.500V20l-4 2.500zM15 12l7 4q2 3-1 5.500L14 25l-3-2.500 6-4-2-1.500z" fill="url(#bg)"/></svg>
  </div>
  <svg class="ml-5 w-9 h-[34px]" viewBox="0 0 36 34"><defs><linearGradient id="tv" x2="1" y2="1"><stop stop-color="#fff"/><stop offset="1" stop-color="#ddd"/></linearGradient></defs><rect x="9" width="27" height="25" rx="1.500" fill="url(#tv)"/><rect y="9" width="27" height="25" rx="1.500" fill="#626262"/><path d="M9 9h18v16H9z" fill="#a8a8a8"/></svg>
  <svg class="ml-[31px] w-[34px] h-[35px]" viewBox="0 0 34 35"><defs><linearGradient id="ch" x2="0" y2="1"><stop stop-color="#8b6db8"/><stop offset="1" stop-color="#5355d4"/></linearGradient></defs><path d="M1 34V17A16.500 17 0 1 1 12 33q-4 2-11 1z" fill="url(#ch)"/><rect x="7" y="10" width="14" height="14" rx="2" fill="#fff"/><path d="M22.500 15l4.500-4v12l-4.500-4z" fill="#fff"/></svg>
  <svg class="ml-[31px] w-9 h-[33px]" viewBox="0 0 36 33"><defs><linearGradient id="ex" x2="1" y2="1"><stop stop-color="#ffd968"/><stop offset="1" stop-color="#f9bd1c"/></linearGradient></defs><path d="M0 1.500Q0 0 1.500 0H12l4 4v8H0z" fill="#dd9a06"/><path d="M0 7h12l4-4h18.500Q36 3 36 4.500V31q0 1.500-1.500 1.500h-33Q0 32.500 0 31z" fill="url(#ex)"/><path d="M6 32.500V26q0-4 4-4h16q4 0 4 4v6.500z" fill="#0b7fd0"/><path d="M11 27h14" stroke="#0b4d86" stroke-width="1.500"/></svg>
  <div class="relative ml-[30px] size-9"><svg class="size-9" viewBox="0 0 36 36"><circle cx="18" cy="18" r="18" fill="#1ed760"/><path d="M6.500 12.500c8-2 16-1.500 23 2.500M7.500 18.500c7-2 13-1 19 2.500M8.500 24.500c6-1.500 11-.5 16 2" fill="none" stroke="#0b0f0c" stroke-width="3" stroke-linecap="round"/></svg><i class="absolute left-[14px] top-[42px] h-[5px] w-[9px] rounded-full bg-[#98999c]"></i></div>
  <svg class="ml-[30px] w-[35px] h-8" viewBox="0 0 35 32"><path d="M8 0h14v8H8z" fill="#21a366"/><path d="M21 0h14v8H21z" fill="#33c481"/><path d="M8 8h14v8H8z" fill="#1f9b5e"/><path d="M21 8h14v8H21z" fill="#21a366"/><path d="M8 16h27v8H8z" fill="#107c41"/><path d="M8 24h27v8H8z" fill="#185c37"/><rect y="7" width="18" height="18" rx="1.500" fill="#10753e"/><text x="4" y="21" font-size="14" font-weight="700" fill="#fff">X</text></svg>
  <svg class="ml-[31px] w-[35px] h-8" viewBox="0 0 35 32"><path d="M8 0h27v8H8z" fill="#41a5ee"/><path d="M8 8h27v8H8z" fill="#2b7cd3"/><path d="M8 16h27v8H8z" fill="#185abd"/><path d="M8 24h27v8H8z" fill="#103f91"/><rect y="7" width="18" height="18" rx="1.500" fill="#1a5cbd"/><text x="2" y="21" font-size="14" font-weight="700" fill="#fff" textLength="14" lengthAdjust="spacingAndGlyphs">W</text></svg>
  <div class="relative ml-[31px] size-9"><svg class="size-9" viewBox="0 0 36 36"><path d="M0 36l2.500-9.500A17.800 17.800 0 1 1 9.500 33.500z" fill="#fff"/><path d="M4 32l1.600-6.500A14.800 14.800 0 1 1 10.500 30.300z" fill="#46c254"/><path d="M12 9.500q1.500-.5 2 .7l1.500 3.500q.2.900-1.500 2.800c2 3.500 4 5 6.500 6 1.500-2 2-2.700 3-2.200l3.500 1.700c1.500.8-.5 4.500-3 5C19 28 9.500 20.500 9 14.500c0-2.500 1.500-4.500 3-5z" fill="#fff"/></svg><b class="absolute left-5 top-[-7px] flex size-6 items-center justify-center rounded-full bg-[#9dabae] text-[17px] font-normal text-[#111]">1</b><i class="absolute left-[14px] top-[42px] h-[5px] w-[9px] rounded-full bg-[#98999c]"></i></div>
  <div class="relative ml-[30px] size-9"><svg class="size-9"><use href="#chrome"/></svg><i class="absolute left-[14px] top-[42px] h-[5px] w-[9px] rounded-full bg-[#98999c]"></i></div>
  <div class="relative ml-[18px] flex size-[60px] items-center justify-center rounded-md border border-[#393f46] bg-[#30353c]"><svg class="mr-px w-[34px] h-9" viewBox="0 0 34 36"><path d="M4 5h30v31H4z" fill="#780c2c"/><path d="M0 3.500L6 0v24l-6 5z" fill="#f0628d"/><path d="M5.500 1.500Q5.500 0 7 0h24v26H5.500z" fill="#e5114d"/><text x="12" y="20.500" font-size="20" font-weight="700" fill="#fff" textLength="13" lengthAdjust="spacingAndGlyphs">A</text><text x="11" y="33" font-size="7.500" font-weight="700" fill="#fff" textLength="15" lengthAdjust="spacingAndGlyphs">CAD</text></svg><i class="absolute left-[17px] top-[53px] h-[5px] w-6 rounded-full bg-[#9dabb0]"></i></div>
  <div class="relative ml-[18px] size-9"><svg class="size-9"><use href="#chrome"/></svg>
    <svg class="absolute left-[18px] top-[-7px] w-[26px] h-[25px]" viewBox="0 0 26 25"><path d="M1 17C-1 6 7 0 14 0c8 0 12 5 12 10l-1 7c-2 5-7 8-13 8-4-1-7-5-11-8z" fill="#3a2a34"/><path d="M5 13l16-5 1 10c-2 5-7 7-12 6-3-2-5-6-5-11z" fill="#9c736f"/><path d="M0 18C-2 5 8-1 16 1c5 2 6 5 4 8L8 13 6 18z" fill="#a8641f"/><path d="M16 1c7 1 10 6 9 11l-5-3q0-5-4-8z" fill="#2b58b5"/><path d="M9 13l14-3-1 5-5 1-2-2-5 3z" fill="#16121a"/></svg>
    <i class="absolute left-[14px] top-[42px] h-[5px] w-[9px] rounded-full bg-[#98999c]"></i></div>
  <svg class="ml-[60px] w-[18px] h-[11px]" viewBox="0 0 18 11"><path d="M1.500 9.500L9 2l7.500 7.500" fill="none" stroke="#fff" stroke-width="2"/></svg>
  <svg class="ml-[31px] w-[17px] h-6" viewBox="0 0 17 24" fill="none" stroke="#c9cbce" stroke-width="1.600"><rect x="4.700" y="1" width="7.600" height="14.500" rx="3.800"/><path d="M1 11q0 8 7.500 8T16 11M8.500 19v5"/></svg>
  <span class="ml-[32px] w-[33px] text-[18px] tracking-[-0.3px]">IND</span>
  <svg class="ml-7 w-6 h-[18px]" viewBox="0 0 24 18" fill="none" stroke="#fff" stroke-width="1.800"><path d="M1 7.500q11-12 22 0M4.500 11q7.500-8 15 0M8 14.200q4-4 8 0"/><circle cx="12" cy="15.500" r="2" fill="#fff" stroke="none"/></svg>
  <svg class="ml-3 w-6 h-5" viewBox="0 0 24 20" fill="none" stroke="#fff" stroke-width="1.600"><path d="M1 7h3.500L10 2v16l-5.500-5H1zM13 7q2.500 3 0 6M16 4.500q4 5.500 0 11"/><path d="M19 2q6 8 0 16" stroke="#6a7077"/></svg>
  <svg class="ml-3 w-6 h-[22px] -mt-1" viewBox="0 0 24 22" fill="none" stroke="#fff" stroke-width="1.800"><path d="M11 6.500h8q2 0 2 2v8.500q0 2-2 2H5q-2 0-2-2M21.500 11H23v4h-1.500"/><path d="M8 0c4 5 4 11-1 13l-4 3-1-1 1.500-3C-1 9 0 4 3 3l1 2z" fill="#fff" stroke="none"/><path d="M7 7l-4 6" stroke="#242a32" stroke-width=".8"/></svg>
  <div class="ml-[24px] flex w-[75px] flex-col items-end gap-[7px] tracking-[-0.2px]"><span>10:11 PM</span><span>9/7/2023</span></div>
</footer>
</body>
</html>
